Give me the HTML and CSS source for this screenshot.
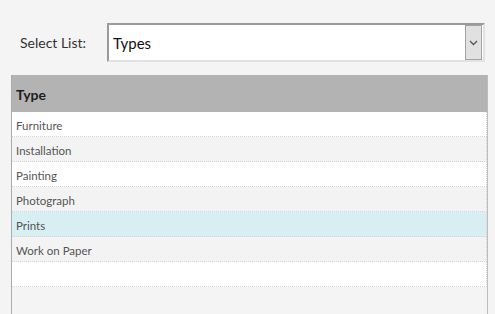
FILE: index.html
```html
<!DOCTYPE html>
<html lang="en">
<head>
    <meta charset="UTF-8">
    <meta name="viewport" content="width=device-width, initial-scale=1.0">
    <title>Select List</title>
    <link rel="stylesheet" href="styles.css">
</head>
<body>
    <div class="toolbar">
        <label class="toolbar-label">Select List:</label>
        <div class="select-box">
            <span class="select-value">Types</span>
            <span class="select-button">
                <svg width="9" height="6" viewBox="0 0 9 6"><path d="M1 1 L4.5 4.5 L8 1" fill="none" stroke="#555" stroke-width="1.3"/></svg>
            </span>
        </div>
    </div>

    <div class="list-table">
        <div class="list-header">Type</div>
        <div class="list-row">Furniture</div>
        <div class="list-row">Installation</div>
        <div class="list-row">Painting</div>
        <div class="list-row">Photograph</div>
        <div class="list-row selected">Prints</div>
        <div class="list-row">Work on Paper</div>
        <div class="list-row"></div>
    </div>
</body>
</html>
```

FILE: styles.css
```css
body{
    margin: 0;
    background-color: #f4f4f4;
    font-family: "Lato", "Open Sans", sans-serif;
    height: 314px;
    overflow: hidden;
}

.toolbar{
    display: flex;
    align-items: center;
    padding-top: 23px;
    padding-left: 20px;
}

.toolbar-label{
    width: 87px;
    font-size: 14px;
    color: #333;
}

.select-box{
    display: flex;
    align-items: stretch;
    justify-content: space-between;
    width: 374px;
    height: 35px;
    background-color: #fff;
    border: 2px solid;
    border-color: #9a9a9a #e2e2e2 #e2e2e2 #9a9a9a;
}

.select-value{
    display: flex;
    align-items: center;
    padding-left: 4px;
    font-size: 15px;
    color: #111;
}

.select-button{
    display: flex;
    align-items: center;
    justify-content: center;
    width: 15px;
    margin-right: 1px;
    background-color: #e1e1e1;
    border: 1px solid #a3a3a3;
}

.list-table{
    margin: 13px 7px 0 11px;
    height: 239px;
    border-left: 1px solid #acacac;
    border-right: 1px solid #bdbdbd;
}

.list-header{
    height: 37px;
    line-height: 39px;
    padding-left: 4px;
    background-color: #b3b3b3;
    font-size: 14px;
    font-weight: bold;
    color: #1e1e1e;
}

.list-row{
    height: 24px;
    line-height: 28px;
    padding-left: 4px;
    font-size: 11.5px;
    color: #555;
    background-color: #fff;
    border-bottom: 1px dotted #d4d4d4;
    border-right: 1px dotted #d4d4d4;
}

.list-row:nth-child(odd){
    background-color: #f3f3f3;
}

.list-row.selected{
    background-color: #d7eef3;
}
```
